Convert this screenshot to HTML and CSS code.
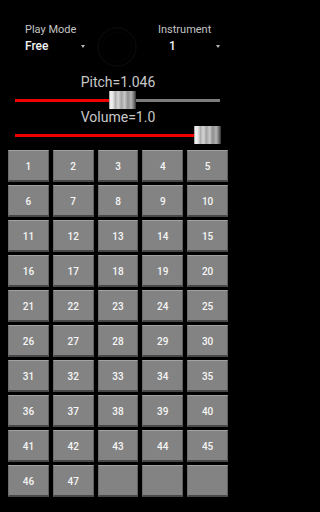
FILE: index.html
```html
<!DOCTYPE html>
<html>
<head>
<meta charset="utf-8">
<link rel="stylesheet" href="styles.css">
</head>
<body>
<div class="app">
  <div class="top">
    <div class="spinner left">
      <div class="label">Play Mode</div>
      <div class="value-row"><span class="value">Free</span><span class="arrow"></span></div>
    </div>
    <svg class="ring" width="42" height="42" viewBox="0 0 42 42"><circle cx="21" cy="21" r="19" fill="none" stroke="#090909" stroke-width="1.5"/><circle cx="21" cy="21" r="15" fill="none" stroke="#050505" stroke-width="1"/></svg>
    <div class="spinner right">
      <div class="label">Instrument</div>
      <div class="value-row"><span class="value inst">1</span><span class="arrow"></span></div>
    </div>
  </div>
  <div class="caption first">Pitch=1.046</div>
  <div class="slider">
    <div class="fill" style="width:94px"></div>
    <div class="thumb"></div>
    <div class="rest"></div>
  </div>
  <div class="caption">Volume=1.0</div>
  <div class="slider">
    <div class="fill" style="width:179px"></div>
    <div class="thumb"></div>
  </div>
  <div class="grid">
    <div class="key">1</div><div class="key">2</div><div class="key">3</div><div class="key">4</div><div class="key">5</div>
    <div class="key">6</div><div class="key">7</div><div class="key">8</div><div class="key">9</div><div class="key">10</div>
    <div class="key">11</div><div class="key">12</div><div class="key">13</div><div class="key">14</div><div class="key">15</div>
    <div class="key">16</div><div class="key">17</div><div class="key">18</div><div class="key">19</div><div class="key">20</div>
    <div class="key">21</div><div class="key">22</div><div class="key">23</div><div class="key">24</div><div class="key">25</div>
    <div class="key">26</div><div class="key">27</div><div class="key">28</div><div class="key">29</div><div class="key">30</div>
    <div class="key">31</div><div class="key">32</div><div class="key">33</div><div class="key">34</div><div class="key">35</div>
    <div class="key">36</div><div class="key">37</div><div class="key">38</div><div class="key">39</div><div class="key">40</div>
    <div class="key">41</div><div class="key">42</div><div class="key">43</div><div class="key">44</div><div class="key">45</div>
    <div class="key">46</div><div class="key">47</div><div class="key"></div><div class="key"></div><div class="key"></div>
  </div>
</div>
</body>
</html>
```
FILE: styles.css
```css
html, body {
  margin: 0;
  padding: 0;
  background: #000;
}
body {
  width: 236px;
  height: 512px;
  overflow: hidden;
  font-family: Roboto, "Liberation Sans", sans-serif;
}
.app {
  display: flex;
  flex-direction: column;
}
.top {
  display: flex;
  align-items: flex-start;
  padding: 23px 16px 0 25px;
  height: 51px;
}
.spinner {
  display: flex;
  flex-direction: column;
}
.spinner.left { width: 60px; }
.spinner.right { width: 62px; margin-left: auto; }
.label {
  font-size: 11px;
  line-height: 13px;
  color: #c4c4c4;
}
.value-row {
  display: flex;
  justify-content: space-between;
  align-items: center;
  margin-top: 3px;
  height: 14px;
}
.value {
  font-size: 12px;
  line-height: 14px;
  font-weight: 500;
  color: #f2f2f2;
}
.value.inst {
  padding-left: 11px;
}
.arrow {
  width: 0;
  height: 0;
  border-left: 2.5px solid transparent;
  border-right: 2.5px solid transparent;
  border-top: 3px solid #b8b8b8;
  margin-top: 1px;
}
.ring {
  margin-top: 3px;
  margin-left: 11px;
}
.caption {
  text-align: center;
  font-size: 14px;
  line-height: 16px;
  color: #c8c8c8;
}
.slider {
  display: flex;
  align-items: center;
  height: 18px;
  margin: 1px 16px 0 15px;
}
.fill {
  height: 3px;
  background: #f00000;
  flex: none;
}
.rest {
  flex: 1;
  height: 3px;
  background: #7c7c7c;
}
.thumb {
  flex: none;
  width: 27px;
  height: 18px;
  background: linear-gradient(90deg, #8a8a8a 0%, #f4f4f4 6%, #e6e6e6 14%, #aeaeae 24%, #d6d6d6 34%, #a4a4a4 46%, #c8c8c8 58%, #8e8e8e 70%, #b4b4b4 82%, #6e6e6e 93%, #2e2e2e 100%);
}
.grid {
  display: grid;
  grid-template-columns: repeat(5, 1fr);
  grid-auto-rows: 32px;
  column-gap: 4px;
  row-gap: 3px;
  margin: 6px 8px 0 8px;
}
.key {
  box-sizing: border-box;
  background: #838383;
  border-top: 1px solid #a2a2a2;
  border-left: 1px solid #6e6e6e;
  border-right: 1px solid #5e5e5e;
  border-bottom: 2px solid #484848;
  display: flex;
  align-items: center;
  justify-content: center;
  padding-top: 2px;
  color: #f6f6f6;
  font-size: 10px;
  font-weight: 500;
}
```
